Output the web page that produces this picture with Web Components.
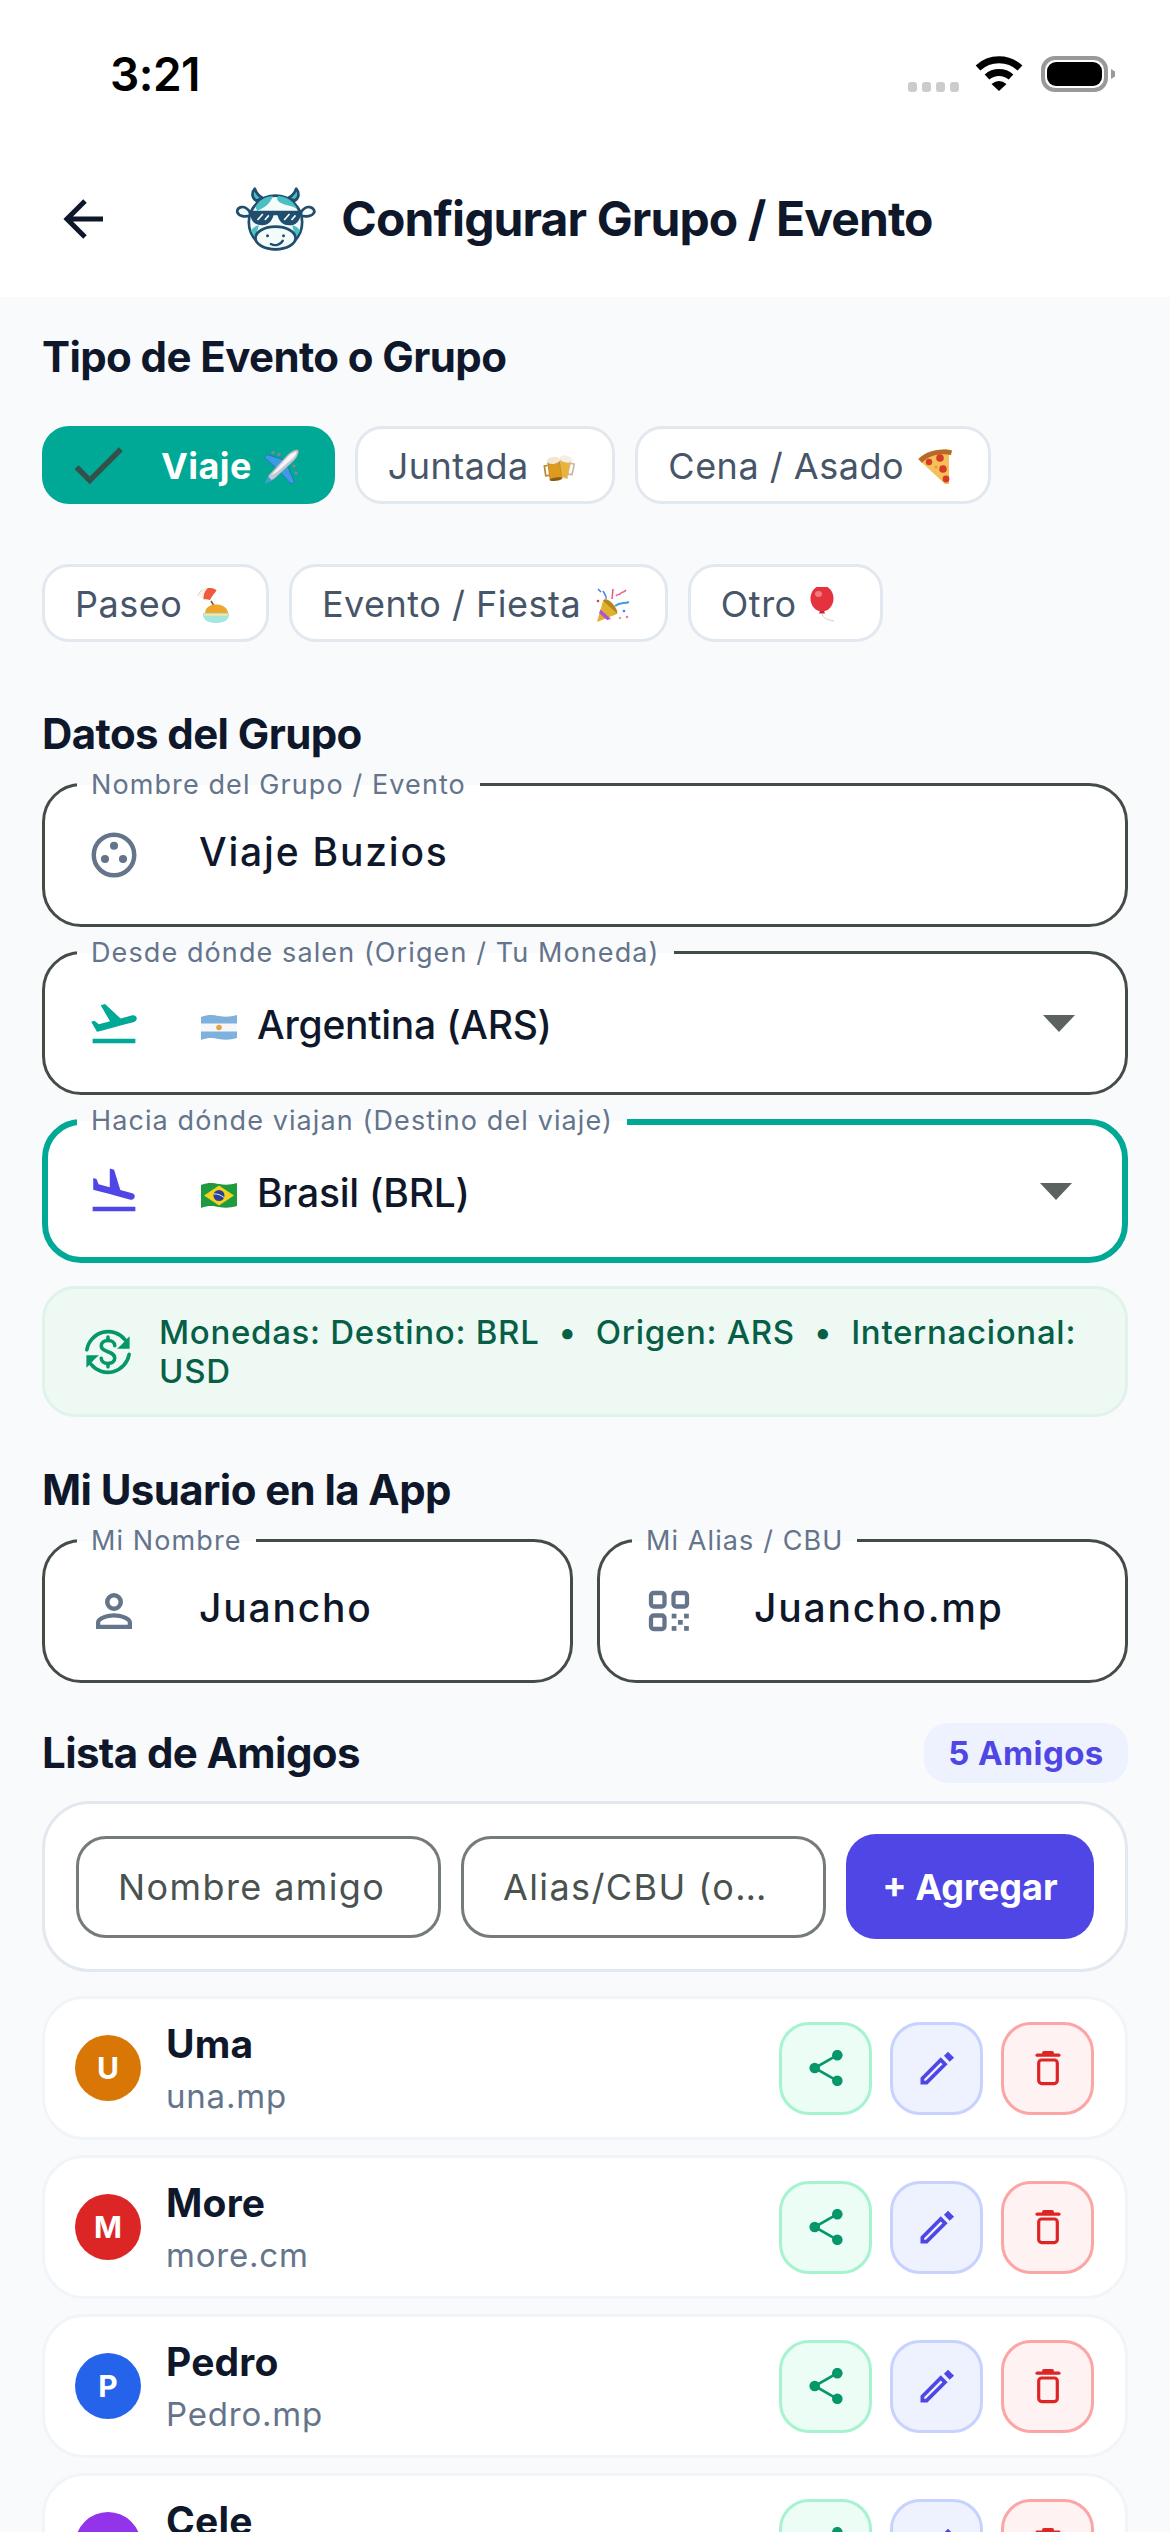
<!DOCTYPE html>
<html lang="es">
<head>
<meta charset="utf-8">
<title>Configurar Grupo / Evento</title>
<style>
  html, body { margin: 0; padding: 0; background: #f8fafc; }
  body { font-family: Inter, "Noto Sans", sans-serif; color: #0f172a; }
</style>
</head>
<body>
<app-screen>
  <status-bar slot="top" time="3:21"></status-bar>
  <app-header slot="top">Configurar Grupo / Evento</app-header>

  <section-title style="margin-top:30px">Tipo de Evento o Grupo</section-title>
  <chip-group>
    <type-chip selected>Viaje <app-emoji name="plane"></app-emoji></type-chip>
    <type-chip>Juntada <app-emoji name="beer"></app-emoji></type-chip>
    <type-chip>Cena / Asado <app-emoji name="pizza"></app-emoji></type-chip>
    <type-chip>Paseo <app-emoji name="beach"></app-emoji></type-chip>
    <type-chip>Evento / Fiesta <app-emoji name="party"></app-emoji></type-chip>
    <type-chip>Otro <app-emoji name="balloon"></app-emoji></type-chip>
  </chip-group>

  <section-title style="margin-top:62px">Datos del Grupo</section-title>
  <field-stack style="margin-top:19px">
    <outlined-field label="Nombre del Grupo / Evento" spaced>
      <app-icon slot="icon" name="circles" color="#64748b"></app-icon>
      Viaje Buzios
    </outlined-field>
    <outlined-field label="Desde dónde salen (Origen / Tu Moneda)" dropdown>
      <app-icon slot="icon" name="takeoff" color="#00a896"></app-icon>
      <flag-icon code="ar"></flag-icon>Argentina (ARS)
    </outlined-field>
    <outlined-field label="Hacia dónde viajan (Destino del viaje)" dropdown focused>
      <app-icon slot="icon" name="landing" color="#4f46e5"></app-icon>
      <flag-icon code="br"></flag-icon>Brasil (BRL)
    </outlined-field>
  </field-stack>
  <info-banner style="margin-top:23px">Monedas: Destino: BRL &nbsp;•&nbsp; Origen: ARS &nbsp;•&nbsp; Internacional: USD</info-banner>

  <section-title style="margin-top:43px">Mi Usuario en la App</section-title>
  <field-pair style="margin-top:19px">
    <outlined-field label="Mi Nombre" spaced>
      <app-icon slot="icon" name="account" color="#64748b"></app-icon>
      Juancho
    </outlined-field>
    <outlined-field label="Mi Alias / CBU" spaced>
      <app-icon slot="icon" name="qr" color="#64748b"></app-icon>
      Juancho.mp
    </outlined-field>
  </field-pair>

  <title-row style="margin-top:40px">
    <section-title>Lista de Amigos</section-title>
    <count-badge slot="end">5 Amigos</count-badge>
  </title-row>
  <friend-add style="margin-top:18px"></friend-add>

  <friend-list style="margin-top:24px">
    <friend-row color="#d97706" initial="U"><span slot="name">Uma</span><span slot="alias">una.mp</span></friend-row>
    <friend-row color="#dc2626" initial="M"><span slot="name">More</span><span slot="alias">more.cm</span></friend-row>
    <friend-row color="#2563eb" initial="P"><span slot="name">Pedro</span><span slot="alias">Pedro.mp</span></friend-row>
    <friend-row color="#9333ea" initial=""><span slot="name">Cele</span></friend-row>
  </friend-list>
</app-screen>

<script>
  const ICONS = {
    back: '<path fill="currentColor" d="M20,11V13H8L13.5,18.5L12.08,19.92L4.16,12L12.08,4.08L13.5,5.5L8,11H20Z"/>',
    check: '<path fill="currentColor" d="M21,7L9,19L3.5,13.5L4.91,12.09L9,16.17L19.59,5.59L21,7Z"/>',
    circles: '<circle cx="12" cy="12" r="9" fill="none" stroke="currentColor" stroke-width="2"/><circle cx="12" cy="7.9" r="1.8" fill="currentColor"/><circle cx="8" cy="13.8" r="1.8" fill="currentColor"/><circle cx="16" cy="13.8" r="1.8" fill="currentColor"/>',
    takeoff: '<path fill="currentColor" d="M2.5,19H21.5V21H2.5V19M22.07,9.64C21.86,8.84 21.03,8.36 20.23,8.58L14.92,10L8,3.57L6.09,4.08L10.23,11.25L5.26,12.58L3.29,11.04L1.84,11.43L3.66,14.59L4.43,15.92L6.03,15.5L11.34,14.07L15.69,12.91L21,11.5C21.81,11.26 22.28,10.44 22.07,9.64Z"/>',
    landing: '<path fill="currentColor" d="M2.5,19H21.5V21H2.5V19M9.68,13.27L14.03,14.43L19.34,15.85C20.14,16.06 20.96,15.59 21.18,14.79C21.39,14 20.92,13.17 20.12,12.95L14.81,11.53L12.05,2.5L10.12,2V10.28L5.15,8.95L4.22,6.63L2.77,6.24V11.41L4.37,11.84L9.68,13.27Z"/>',
    account: '<path fill="currentColor" d="M12,4A4,4 0 0,1 16,8A4,4 0 0,1 12,12A4,4 0 0,1 8,8A4,4 0 0,1 12,4M12,6A2,2 0 0,0 10,8A2,2 0 0,0 12,10A2,2 0 0,0 14,8A2,2 0 0,0 12,6M12,13C14.67,13 20,14.33 20,17V20H4V17C4,14.33 9.33,13 12,13M12,14.9C9.03,14.9 5.9,16.36 5.9,17V18.1H18.1V17C18.1,16.36 14.97,14.9 12,14.9Z"/>',
    qr: '<g fill="none" stroke="currentColor" stroke-width="1.9"><rect x="4" y="4" width="6" height="6" rx="1.2"/><rect x="14" y="4" width="6" height="6" rx="1.2"/><rect x="4" y="14" width="6" height="6" rx="1.2"/></g><g fill="currentColor"><rect x="13.2" y="13.2" width="2.1" height="2.1"/><rect x="18.7" y="13.2" width="2.1" height="2.1"/><rect x="16" y="16" width="2.1" height="2.1"/><rect x="13.2" y="18.7" width="2.1" height="2.1"/><rect x="18.7" y="18.7" width="2.1" height="2.1"/></g>',
    currency: '<g fill="none" stroke="currentColor" stroke-width="1.6" stroke-linecap="round"><path d="M2.6 11 A9.6 9.6 0 0 1 19.6 6.6"/><path d="M21.4 13 A9.6 9.6 0 0 1 4.4 17.4"/><path d="M15 9.2 C15 7.7 13.7 6.9 12 6.9 C10.3 6.9 9 7.8 9 9.3 C9 12.3 15 11.5 15 14.7 C15 16.2 13.7 17.1 12 17.1 C10.3 17.1 9 16.3 9 14.8"/><path d="M12 5.4 V6.9 M12 17.1 V18.6"/></g><path fill="currentColor" d="M21.6 5 V10.6 H16 L18 8.8 L20 6.6Z M2.4 19 V13.4 H8 L6 15.2 L4 17.4Z"/>',
    share: '<g fill="currentColor"><circle cx="29.3" cy="5.2" r="5.3"/><circle cx="6.7" cy="18" r="5.3"/><circle cx="29.3" cy="30.8" r="5.3"/></g><path fill="none" stroke="currentColor" stroke-width="2.6" d="M29.3 5.2 L6.7 18 L29.3 30.8"/>',
    pencil: '<path fill="currentColor" fill-rule="evenodd" d="M14.06,6.19L3,17.25V21H6.75L17.81,9.94Z M14.06,9L15,9.94L5.92,19H5V18.08Z"/><polygon fill="currentColor" points="18,3.2 21.3,6.45 18.9,8.6 15.8,5.35"/>',
    trash: '<g fill="currentColor"><rect x="12" y="1" width="12" height="4" rx="2"/><rect x="5.5" y="3.6" width="25" height="3.2" rx="1.6"/></g><rect x="8.7" y="10" width="18.6" height="23.6" rx="3" fill="none" stroke="currentColor" stroke-width="3.2"/>'
  };

  const EMOJI = {
    plane: '<path d="M21 11 L4 5.500 L1.500 8.500 L13 19Z" fill="#3d9be4" stroke="#1f6fb5" stroke-width=".8"/><path d="M24 16 L31.500 33 L28 35 L16 22Z" fill="#3d9be4" stroke="#1f6fb5" stroke-width=".8"/><circle cx="10" cy="3.500" r="1.700" fill="#7d8a94"/><circle cx="16" cy="5.500" r="1.700" fill="#7d8a94"/><circle cx="31" cy="17" r="1.700" fill="#7d8a94"/><circle cx="33" cy="24" r="1.700" fill="#7d8a94"/><path d="M35 1 C36.500 4 33.500 9 30 12.500 L11 30 L2.500 34 L6 26 L24 6.500 C27.500 3 32 0 35 1Z" fill="#c3cad0" stroke="#8d959c" stroke-width=".5"/><path d="M33.500 2.500 C30 3.500 27 5.500 25 7.500 L8 26.500 L14 23 L30 9 C32 7 33.500 5 33.500 2.500Z" fill="#f4f6f7"/><path d="M2 34.500 L5 27.500 L8.500 31Z" fill="#3d9be4"/>',
    beer: '<g transform="translate(3 3) scale(.84)"><g transform="rotate(12 24 18)"><path d="M17 9 H31 V31 H17Z" fill="#d9c9ae"/><path d="M30 12 H35 V25 H30" fill="none" stroke="#c7b9a4" stroke-width="2"/><path d="M18 12 H30 V30 H18Z" fill="#e8b23c"/><ellipse cx="24" cy="8" rx="7.500" ry="4" fill="#f6eee0"/></g><g transform="rotate(-8 12 20)"><path d="M5 11 H20 V33 H5Z" fill="#c48a2a"/><path d="M6 14 H19 V32 H6Z" fill="#dd9a1e"/><path d="M5 15 H1 V27 H5" fill="none" stroke="#b8862f" stroke-width="2"/><ellipse cx="12.500" cy="10" rx="8" ry="4.200" fill="#f3e7d4"/><ellipse cx="12.500" cy="32.500" rx="7.500" ry="2" fill="#8a5a1a"/></g></g>',
    pizza: '<path d="M1 10 C10 1 26 -1 35 1.500 C34 3 33 3 32 4 L32 35 L28 35Z" fill="#f4c05a"/><path d="M1.500 10 C10 1 26 -1 35 1.500 L34 6 C25 4 12 5.500 5 14Z" fill="#b8692a"/><circle cx="23" cy="9" r="3.800" fill="#d93a26"/><circle cx="12" cy="13" r="3.200" fill="#d93a26"/><circle cx="26" cy="20" r="3.800" fill="#d93a26"/><circle cx="19" cy="18" r="1.500" fill="#e79a2e"/><circle cx="29" cy="30" r="3.400" fill="#d93a26"/>',
    beach: '<path d="M16 14 L21 22" stroke="#7c5a3a" stroke-width="1.600"/><path d="M2.500 9 C5 1.500 15 -1 21.500 3.500 Z" fill="#e23b2e"/><path d="M2.500 9 C4 5 8 1.500 13 1 C10 4 8 8 8.500 12.500 C6 10.500 4 9.500 2.500 9Z" fill="#f7f3ea"/><path d="M13 1 C17 .500 20 1.800 21.500 3.500 C19.500 6.500 16.500 9.500 15 13 C12.500 12 10.500 12 8.500 12.500 C8 8 10 4 13 1Z" fill="#ef5a3e"/><path d="M10 27 C10 20 15 17.500 21 17.500 C27 17.500 33 20 33 27Z" fill="#f0a62a"/><path d="M8 26 H34 C35 32 30 36 21 36 C12 36 7 32 8 26Z" fill="#a4e6e2"/><path d="M9 27 H33 L32.500 29 H9.500Z" fill="#f3e39a"/>',
    party: '<path d="M3 35 L9 14 L23 27Z" fill="#e3b02d"/><path d="M6.500 22.500 L17 32 L13 33 L5 26Z" fill="#a855d6"/><path d="M9 14 L23 27 C25 24 18 14 13 12.500 C11 12 9.500 12.500 9 14Z" fill="#b98516"/><path d="M12 12 C13 8 10 7 9 4 M7 5 L4 2" stroke="#3f7fe8" stroke-width="1.500" fill="none"/><path d="M18 12 L19 2" stroke="#ec5a6d" stroke-width="1.500"/><path d="M22 9 C24 6 25 9 27 6 C29 4 30 6 32 3" stroke="#ef5f8c" stroke-width="1.500" fill="none"/><path d="M21 19 C26 15 30 17 35 15" stroke="#3f9be8" stroke-width="2" fill="none"/><circle cx="30" cy="24" r="1.300" fill="#3f7fe8"/><circle cx="33" cy="30" r="1.300" fill="#ef7f8c"/><circle cx="26" cy="31" r="1.300" fill="#f0a0a8"/><circle cx="4" cy="14" r="1.300" fill="#e23b2e"/>',
    balloon: '<ellipse cx="13" cy="11.500" rx="11.500" ry="13" fill="#e4333f"/><ellipse cx="9.500" cy="7" rx="3.500" ry="3" fill="#f47a80"/><path d="M11 24 H15 L16 26.500 H10Z" fill="#c12632"/><path d="M13 26.500 C14 31 18 33 25 34" fill="none" stroke="#cfcfcf" stroke-width="1"/>'
  };

  class AppScreen extends HTMLElement {
    constructor() {
      super();
      this.attachShadow({mode: 'open'}).innerHTML = `
        <style>
          :host { display: block; width: 1170px; height: 2532px; overflow: hidden; background: #f8fafc; }
          .top { background: #fff; }
          main { display: flex; flex-direction: column; padding: 0 42px; }
        </style>
        <div class="top"><slot name="top"></slot></div>
        <main><slot></slot></main>`;
    }
  }

  class StatusBar extends HTMLElement {
    connectedCallback() {
      this.attachShadow({mode: 'open'}).innerHTML = `
        <style>
          :host { display: flex; align-items: flex-start; justify-content: space-between; height: 132px; padding: 54px 55px 0 110px; box-sizing: border-box; }
          .time { font: 600 46px/40px Inter, sans-serif; color: #000; letter-spacing: -.5px; }
          .right { display: flex; align-items: flex-start; }
          .dots { display: flex; gap: 5px; margin: 28px 16px 0 0; }
          .dots i { width: 9px; height: 10px; border-radius: 3px; background: #ccc; }
          svg { display: block; }
        </style>
        <div class="time">${this.getAttribute('time')}</div>
        <div class="right">
          <div class="dots"><i></i><i></i><i></i><i></i></div>
          <svg width="48" height="36" viewBox="0 0 48 36" style="margin:1px 18px 0 0">
            <path d="M3 13 A31 31 0 0 1 45 13" fill="none" stroke="#000" stroke-width="7"/>
            <path d="M12 22 A18 18 0 0 1 36 22" fill="none" stroke="#000" stroke-width="7"/>
            <path d="M16.500 29 Q24 23 31.500 29 L24 36Z"/>
          </svg>
          <svg width="74" height="36" viewBox="0 0 74 36" style="margin-top:2px">
            <rect x="2" y="2" width="63" height="32" rx="12" fill="none" stroke="#999" stroke-width="4"/>
            <rect x="6" y="6" width="55" height="24" rx="9"/>
            <path d="M70 13 L74 15.500 V20.500 L70 23Z" fill="#999"/>
          </svg>
        </div>`;
    }
  }

  class AppHeader extends HTMLElement {
    connectedCallback() {
      this.attachShadow({mode: 'open'}).innerHTML = `
        <style>
          :host { display: grid; grid-template-columns: 1fr auto 1fr; align-items: center; height: 165px; padding-top: 9px; box-sizing: border-box; }
          app-icon { margin-left: 53px; color: #0f172a; }
          .brand { display: flex; align-items: center; gap: 22px; margin-right: 5px; }
          h1 { margin: 0; font: 700 48px/60px Inter, sans-serif; letter-spacing: -.9px; color: #0f172a; }
          svg { display: block; }
        </style>
        <app-icon name="back" size="60" color="#0f172a"></app-icon>
        <div class="brand">
          <svg width="87" height="70" viewBox="100 100 260 210">
            <g stroke="#1f4e6e" stroke-width="8" stroke-linejoin="round">
              <path d="M152 182 C135 160 115 170 115 184 C120 198 140 200 155 194Z" fill="#f4fbfb"/>
              <path d="M308 182 C325 160 345 170 347 184 C340 198 320 200 305 194Z" fill="#f4fbfb"/>
              <path d="M172 150 C158 140 158 125 168 114 C172 128 180 136 192 142Z" fill="#4bbfc3"/>
              <path d="M288 150 C302 140 302 125 292 114 C288 128 280 136 268 142Z" fill="#4bbfc3"/>
              <ellipse cx="230" cy="215" rx="80" ry="80" fill="#f4fbfb"/>
            </g>
            <path d="M170 170 C180 145 205 137 222 136 C218 150 205 170 175 180Z" fill="#4bbfc3"/>
            <path d="M238 136 C260 137 285 150 295 175 C280 165 262 165 248 158 C235 152 232 144 238 136Z" fill="#4bbfc3"/>
            <path d="M156 240 C165 228 172 226 180 224 L170 262Z" fill="#4bbfc3"/>
            <path d="M304 240 C295 228 288 226 280 224 L290 262Z" fill="#4bbfc3"/>
            <ellipse cx="230" cy="262" rx="60" ry="34" fill="#f4fbfb" stroke="#1f4e6e" stroke-width="8"/>
            <path d="M150 180 H310 L306 186 C304 212 292 224 270 224 C250 224 240 210 236 194 H224 C220 210 210 224 190 224 C168 224 156 212 154 186Z" fill="#1f4e6e"/>
            <g stroke="#f4fbfb" stroke-width="5"><path d="M176 208 L192 190 M198 208 L210 194"/><path d="M256 208 L272 190 M278 208 L290 194"/></g>
            <path d="M216 280 C228 286 244 284 252 270" fill="none" stroke="#1f4e6e" stroke-width="7" stroke-linecap="round"/>
            <circle cx="206" cy="255" r="4.500" fill="#1f4e6e"/><circle cx="254" cy="255" r="4.500" fill="#1f4e6e"/>
          </svg>
          <h1><slot></slot></h1>
        </div>`;
    }
  }

  class SectionTitle extends HTMLElement {
    constructor() {
      super();
      this.attachShadow({mode: 'open'}).innerHTML = `
        <style>
          :host { display: block; font: 700 42px/60px Inter, sans-serif; letter-spacing: -.6px; color: #0f172a; }
        </style>
        <slot></slot>`;
    }
  }

  class TitleRow extends HTMLElement {
    constructor() {
      super();
      this.attachShadow({mode: 'open'}).innerHTML = `
        <style>
          :host { display: flex; align-items: center; justify-content: space-between; }
        </style>
        <slot></slot><slot name="end"></slot>`;
    }
  }

  class CountBadge extends HTMLElement {
    constructor() {
      super();
      this.attachShadow({mode: 'open'}).innerHTML = `
        <style>
          :host { display: block; width: 204px; box-sizing: border-box; text-align: center; font: 700 33px/60px Inter, sans-serif; letter-spacing: .4px; color: #4f46e5; background: #eef2ff; border-radius: 24px; }
        </style>
        <slot></slot>`;
    }
  }

  class ChipGroup extends HTMLElement {
    constructor() {
      super();
      this.attachShadow({mode: 'open'}).innerHTML = `
        <style>
          :host { display: flex; flex-wrap: wrap; gap: 60px 20px; margin-top: 39px; }
        </style>
        <slot></slot>`;
    }
  }

  class TypeChip extends HTMLElement {
    connectedCallback() {
      const selected = this.hasAttribute('selected');
      this.attachShadow({mode: 'open'}).innerHTML = `
        <style>
          :host { display: flex; align-items: center; height: 78px; box-sizing: border-box; padding: 2px 35px 0 30px; white-space: nowrap;
            font: 400 36px/48px Inter, sans-serif; letter-spacing: .5px; color: #475569; background: #fff; border: 3px solid #e2e8f0; border-radius: 27px; }
          :host([selected]) { padding: 2px 36px 0 23px; border: 0; background: #00a896; color: #fff; font-weight: 700; letter-spacing: .4px; }
          app-icon { margin: -2px 30px 0 0; }
        </style>
        ${selected ? '<app-icon name="check" size="66" color="#34504a"></app-icon>' : ''}
        <span><slot></slot></span>`;
    }
  }

  class AppIcon extends HTMLElement {
    connectedCallback() {
      const name = this.getAttribute('name');
      const size = this.getAttribute('size') || 54;
      const box = name === 'share' || name === 'trash' ? 36 : 24;
      this.attachShadow({mode: 'open'}).innerHTML = `
        <style>
          :host { display: block; width: ${size}px; height: ${size}px; color: ${this.getAttribute('color') || 'inherit'}; }
          svg { display: block; }
        </style>
        <svg width="${size}" height="${size}" viewBox="0 0 ${box} ${box}">${ICONS[name]}</svg>`;
    }
  }

  class AppEmoji extends HTMLElement {
    connectedCallback() {
      this.attachShadow({mode: 'open'}).innerHTML = `
        <style>
          :host { display: inline-block; width: 36px; height: 36px; margin-left: 2px; vertical-align: -6px; letter-spacing: 0; }
          svg { display: block; }
        </style>
        <svg width="36" height="36" viewBox="0 0 36 36">${EMOJI[this.getAttribute('name')]}</svg>`;
    }
  }

  class FlagIcon extends HTMLElement {
    connectedCallback() {
      const wave = 'M0 3 C8 0 12 1 18 2 C24 3 29 3 36 1 V24 C29 26 24 26 18 25 C12 24 8 23 0 26Z';
      const art = this.getAttribute('code') === 'ar'
        ? `<clipPath id="w"><path d="${wave}"/></clipPath>
           <g clip-path="url(#w)"><rect width="36" height="27" fill="#f5f7f8"/><rect width="36" height="9.500" fill="#7eb2dd"/><rect y="17.500" width="36" height="9.500" fill="#7eb2dd"/><circle cx="18" cy="13.500" r="2.800" fill="#e9a23b"/></g>`
        : `<clipPath id="w"><path d="${wave}"/></clipPath>
           <g clip-path="url(#w)"><rect width="36" height="27" fill="#1f9a3e"/><path d="M18 3.500 L33 13.500 L18 23.500 L3 13.500Z" fill="#f4d21f"/><circle cx="18" cy="13.500" r="5.500" fill="#2c3f94"/><path d="M12.800 12 C16 11.500 20 13 23 15.500" stroke="#e8edf5" stroke-width="1" fill="none"/></g>`;
      this.attachShadow({mode: 'open'}).innerHTML = `
        <style>
          :host { display: inline-block; width: 36px; height: 27px; margin: 0 20px 0 2px; vertical-align: -2px; }
          svg { display: block; }
        </style>
        <svg width="36" height="27" viewBox="0 0 36 27">${art}</svg>`;
    }
  }

  class FieldStack extends HTMLElement {
    constructor() {
      super();
      this.attachShadow({mode: 'open'}).innerHTML = `
        <style>
          :host { display: flex; flex-direction: column; gap: 24px; }
        </style>
        <slot></slot>`;
    }
  }

  class FieldPair extends HTMLElement {
    constructor() {
      super();
      this.attachShadow({mode: 'open'}).innerHTML = `
        <style>
          :host { display: grid; grid-template-columns: 1fr 1fr; gap: 24px; }
        </style>
        <slot></slot>`;
    }
  }

  class OutlinedField extends HTMLElement {
    connectedCallback() {
      this.attachShadow({mode: 'open'}).innerHTML = `
        <style>
          :host { display: flex; align-items: center; position: relative; height: 144px; box-sizing: border-box; padding-left: 33px; background: #fff; border: 3px solid #444c48; border-radius: 39px;
            font: 500 39px/60px Inter, sans-serif; letter-spacing: -.25px; color: #0f172a; white-space: nowrap; }
          :host([focused]) { padding-left: 30px; border: 6px solid #00a896; }
          :host([spaced]) { letter-spacing: 1.8px; }
          :host([spaced]) .value { padding-bottom: 7px; }
          :host([dropdown]) .value { padding-top: 4px; }
          .label { position: absolute; left: 32px; top: -16px; padding: 0 14px; font: 400 27px/30px Inter, sans-serif; letter-spacing: 1.1px; color: #64748b;
            background: linear-gradient(#f8fafc 50%, #fff 50%); }
          :host([focused]) .label { left: 29px; top: -19px; }
          .icon { width: 54px; margin: 0 58px 0 9px; flex: none; }
          .value { flex: 1; }
          svg { display: block; margin-right: 50px; }
        </style>
        <span class="label">${this.getAttribute('label')}</span>
        <div class="icon"><slot name="icon"></slot></div>
        <div class="value"><slot></slot></div>
        ${this.hasAttribute('dropdown') ? '<svg width="32" height="17" viewBox="0 0 32 17"><path d="M0 0 H32 L16 17Z" fill="#5b625f"/></svg>' : ''}`;
    }
  }

  class InfoBanner extends HTMLElement {
    constructor() {
      super();
      this.attachShadow({mode: 'open'}).innerHTML = `
        <style>
          :host { display: flex; align-items: center; gap: 24px; height: 131px; box-sizing: border-box; padding: 0 36px; background: #eef9f4; border: 3px solid #dff3ea; border-radius: 33px;
            font: 500 33px/39px Inter, sans-serif; letter-spacing: .7px; color: #065f46; }
          app-icon { flex: none; }
        </style>
        <app-icon name="currency" size="54" color="#059669"></app-icon>
        <div><slot></slot></div>`;
    }
  }

  class FriendAdd extends HTMLElement {
    constructor() {
      super();
      this.attachShadow({mode: 'open'}).innerHTML = `
        <style>
          :host { display: flex; align-items: center; gap: 20px; padding: 30px 31px; background: #fff; border: 3px solid #e2e8f0; border-radius: 48px; }
          .input { flex: 1; min-width: 0; height: 102px; box-sizing: border-box; display: flex; align-items: center; padding-left: 39px; background: #fff; border: 3px solid #757b78; border-radius: 30px;
            font: 400 36px/48px Inter, sans-serif; letter-spacing: 1.4px; color: #49524f; white-space: nowrap; overflow: hidden; }
          .btn { width: 248px; height: 105px; display: flex; align-items: center; justify-content: center; background: #4f46e5; border-radius: 30px; font: 700 36px/48px Inter, sans-serif; color: #fff; }
        </style>
        <div class="input">Nombre amigo</div>
        <div class="input">Alias/CBU (o…</div>
        <div class="btn">+ Agregar</div>`;
    }
  }

  class FriendList extends HTMLElement {
    constructor() {
      super();
      this.attachShadow({mode: 'open'}).innerHTML = `
        <style>
          :host { display: flex; flex-direction: column; gap: 15px; }
        </style>
        <slot></slot>`;
    }
  }

  class IconBtn extends HTMLElement {
    connectedCallback() {
      this.attachShadow({mode: 'open'}).innerHTML = `
        <style>
          :host { display: flex; align-items: center; justify-content: center; width: 93px; height: 93px; box-sizing: border-box; border: 3px solid; border-radius: 30px; }
          :host([tone=green]) { background: #ecfdf5; border-color: #a7f3d0; }
          :host([tone=indigo]) { background: #eef2ff; border-color: #c7d2fe; }
          :host([tone=red]) { background: #fef2f2; border-color: #fca5a5; }
        </style>
        <slot></slot>`;
    }
  }

  class FriendRow extends HTMLElement {
    connectedCallback() {
      this.attachShadow({mode: 'open'}).innerHTML = `
        <style>
          :host { display: flex; align-items: center; height: 144px; box-sizing: border-box; padding: 0 31px 0 30px; background: #fff; border: 3px solid #f1f5f9; border-radius: 42px; }
          .avatar { width: 66px; height: 66px; border-radius: 50%; flex: none; display: flex; align-items: center; justify-content: center; background: ${this.getAttribute('color')}; color: #fff; font: 700 30px/36px Inter, sans-serif; }
          .text { flex: 1; margin-left: 25px; padding-top: 4px; min-width: 0; }
          .name { font: 700 39px/48px Inter, sans-serif; letter-spacing: .2px; color: #0f172a; }
          .alias { margin-top: 4px; height: 48px; font: 400 33px/48px Inter, sans-serif; letter-spacing: .8px; color: #64748b; }
          .actions { display: flex; gap: 18px; }
        </style>
        <div class="avatar">${this.getAttribute('initial')}</div>
        <div class="text">
          <div class="name"><slot name="name"></slot></div>
          <div class="alias"><slot name="alias"></slot></div>
        </div>
        <div class="actions">
          <icon-btn tone="green"><app-icon name="share" size="36" color="#059669"></app-icon></icon-btn>
          <icon-btn tone="indigo"><app-icon name="pencil" size="44" color="#4f46e5"></app-icon></icon-btn>
          <icon-btn tone="red"><app-icon name="trash" size="36" color="#dc2626"></app-icon></icon-btn>
        </div>`;
    }
  }

  customElements.define('app-icon', AppIcon);
  customElements.define('app-emoji', AppEmoji);
  customElements.define('flag-icon', FlagIcon);
  customElements.define('icon-btn', IconBtn);
  customElements.define('status-bar', StatusBar);
  customElements.define('app-header', AppHeader);
  customElements.define('section-title', SectionTitle);
  customElements.define('title-row', TitleRow);
  customElements.define('count-badge', CountBadge);
  customElements.define('chip-group', ChipGroup);
  customElements.define('type-chip', TypeChip);
  customElements.define('field-stack', FieldStack);
  customElements.define('field-pair', FieldPair);
  customElements.define('outlined-field', OutlinedField);
  customElements.define('info-banner', InfoBanner);
  customElements.define('friend-add', FriendAdd);
  customElements.define('friend-list', FriendList);
  customElements.define('friend-row', FriendRow);
  customElements.define('app-screen', AppScreen);
</script>
</body>
</html>
